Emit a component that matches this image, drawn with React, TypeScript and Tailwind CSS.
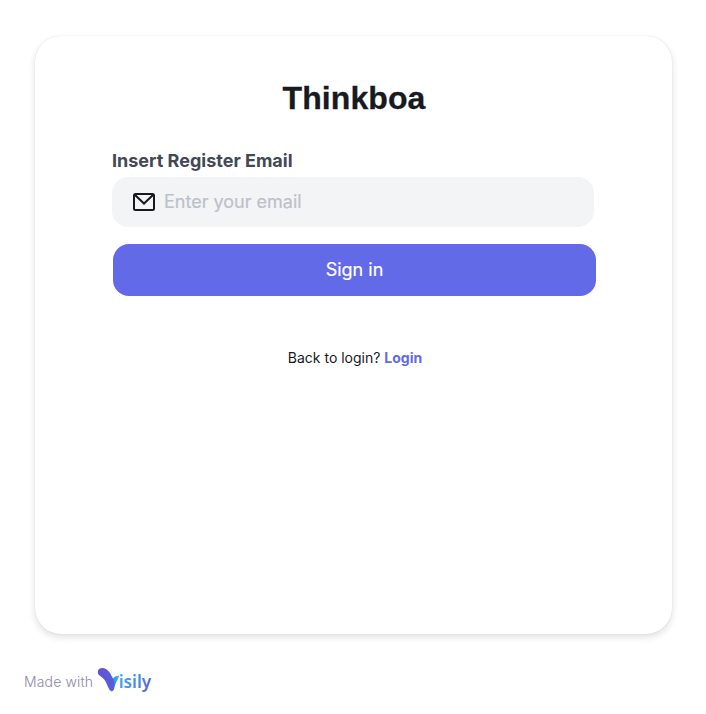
function VisilyLogo() {
  return (
    <svg className="ml-[5px] shrink-0 overflow-visible" width="60" height="35" viewBox="97 663 60 35" role="img" aria-label="Visily">
      <defs>
        <linearGradient id="stem" x1="0" y1="0" x2="0.8" y2="1">
          <stop offset="0" stopColor="#6552d2" />
          <stop offset="1" stopColor="#5260e0" />
        </linearGradient>
        <linearGradient id="leaf" x1="1" y1="0" x2="0" y2="1">
          <stop offset="0" stopColor="#35b3ee" />
          <stop offset="1" stopColor="#4775e3" />
        </linearGradient>
        <linearGradient id="word" gradientUnits="userSpaceOnUse" x1="119" y1="674" x2="151" y2="692">
          <stop offset="0" stopColor="#39a9ec" />
          <stop offset="0.55" stopColor="#4b8ae8" />
          <stop offset="1" stopColor="#6054d8" />
        </linearGradient>
      </defs>
      <path d="M111 691C110 682 112 676 119 675.6C118.7 679 116 681 114 689C113.5 691 111.5 692 111 691Z" fill="url(#leaf)" />
      <path d="M97.8 672C97.8 669.5 99.7 668 102.5 668C107.5 668 110.5 673.5 112.5 677.5C114.2 681 114.8 683 114.3 687C113.8 691.5 110.5 692 109 689C106.5 683.5 105.5 679.5 101.5 677C99 675.4 97.8 674 97.8 672Z" fill="url(#stem)" />
      <text x="118.7" y="688" textLength="32.5" lengthAdjust="spacingAndGlyphs" fill="url(#word)" className="font-['Noto_Sans',sans-serif] text-[18.5px] font-semibold">isily</text>
    </svg>
  );
}

export default function App() {
  return (
    <main className="h-[714px] w-[706px] bg-white pt-[36px] pl-[35px] font-['Inter','Liberation_Sans',sans-serif]">
      <section className="flex h-[598px] w-[637px] flex-col rounded-[26px] bg-white pl-[77px] shadow-[0_0_1px_#171a1f26,0_3px_7px_#171a1f24]">
        <h1 className="mt-[38px] w-[484px] text-center font-['Liberation_Sans',sans-serif] text-[32px] leading-[48px] font-bold tracking-[0.1px] text-[#171a1f] [-webkit-text-stroke:0.3px_#171a1f]">Thinkboa</h1>
        <label className="mt-[25px] text-[18px] leading-[28px] font-bold text-[#424955]">Insert Register Email</label>
        <div className="mt-[2px] flex h-[50px] w-[482px] items-center rounded-[16px] bg-[#f3f4f6] pl-[21px]">
          <svg width="22" height="18" viewBox="0 0 22 18" fill="none" stroke="#171a1f" strokeWidth="2"><rect x="1" y="1" width="20" height="16" rx="1.5" /><path d="M1.5 1.5 11 10.5 20.5 1.5" /></svg>
          <span className="mb-[2px] ml-[9px] text-[18px] text-[#bcc1ca] [-webkit-text-stroke:0.2px_#bcc1ca]">Enter your email</span>
        </div>
        <button className="mt-[17px] ml-px h-[52px] w-[483px] rounded-[16px] bg-[#636ae8] pb-[2px] text-[18px] text-white [-webkit-text-stroke:0.2px_white]">Sign in</button>
        <p className="mt-[51px] w-[486px] text-center text-[14px] leading-[22px] text-[#171a1f]">Back to login? <a className="font-bold text-[#636ae8]">Login</a></p>
      </section>
      <footer className="-ml-[11px] mt-[29px] flex h-[35px] items-center">
        <span className="w-[68px] pt-[2px] text-[14px] leading-[22px] font-light tracking-[0.15px] whitespace-nowrap text-[#8f88ac]">Made with</span>
        <VisilyLogo />
      </footer>
    </main>
  );
}
